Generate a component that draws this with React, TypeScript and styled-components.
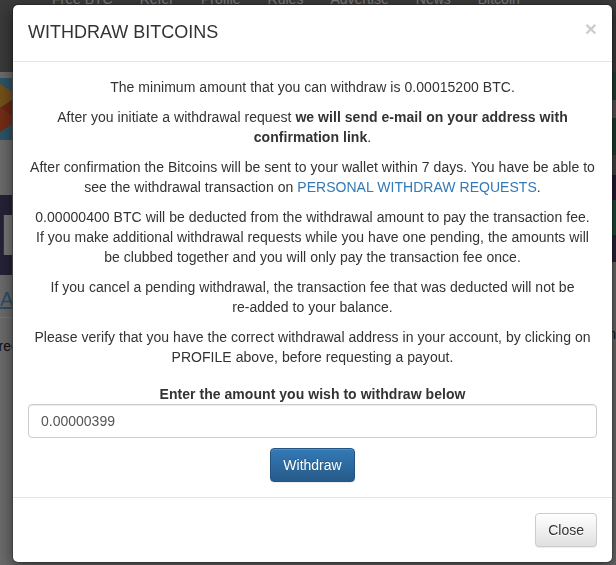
import React from 'react';
import styled, { createGlobalStyle } from 'styled-components';

const GlobalStyle = createGlobalStyle`
  html, body {
    margin: 0;
    padding: 0;
  }
  body {
    font-family: "Liberation Sans", Arial, Helvetica, sans-serif;
    font-size: 14px;
    line-height: 1.42857143;
    color: #333;
    background: #fff;
  }
  * {
    box-sizing: border-box;
  }
`;

const navLinks = ['Free BTC', 'Refer', 'Profile', 'Rules', 'Advertise', 'News', 'Bitcoin'];

const Page = styled.div`
  position: relative;
  width: 616px;
  height: 565px;
  overflow: hidden;
  background: #d6d6d6;
`;

const NavBar = styled.div`
  height: 72px;
  background: #747474;
  overflow: hidden;
`;

const NavLinks = styled.ul`
  display: flex;
  gap: 27px;
  list-style: none;
  margin: -11px 0 0;
  padding: 0 0 0 52px;
`;

const NavLink = styled.li`
  color: #f2f2f2;
  white-space: nowrap;
`;

const Content = styled.div`
  display: flex;
  justify-content: space-between;
`;

const LeftCol = styled.div`
  width: 12px;
  display: flex;
  flex-direction: column;
  padding-top: 6px;
  overflow: hidden;
`;

const RightCol = styled.div`
  width: 5px;
  display: flex;
  flex-direction: column;
  align-items: flex-end;
  overflow: hidden;
`;

const Ad = styled.div<{ $bg: string; $h: number; $mt?: number }>`
  flex: none;
  width: 40px;
  height: ${p => p.$h}px;
  margin-top: ${p => p.$mt ?? 0}px;
  background: ${p => p.$bg};
  overflow: hidden;
  color: #eee;
  font-size: 58px;
  font-weight: bold;
  line-height: 80px;
  letter-spacing: -4px;
`;

const SideLink = styled.a`
  display: block;
  margin-top: 12px;
  color: #5a9ad8;
  font-size: 20px;
  text-decoration: underline;
  line-height: 24px;
`;

const SideRule = styled.hr`
  width: 40px;
  margin: 6px 0 0;
  border: 0;
  border-top: 1px solid #eee;
`;

const SideText = styled.div<{ $shift: number; $top: number }>`
  flex: none;
  margin-top: ${p => p.$top}px;
  margin-left: ${p => p.$shift}px;
  color: #222;
  white-space: nowrap;
`;

const Backdrop = styled.div`
  position: fixed;
  inset: 0;
  background: rgba(0, 0, 0, 0.5);
`;

const ModalWrap = styled.div`
  position: fixed;
  inset: 0;
  overflow: hidden;
`;

const Dialog = styled.div`
  width: 601px;
  margin: 4px 0 0 12px;
  background: #fff;
  border: 1px solid rgba(0, 0, 0, 0.2);
  border-radius: 6px;
  box-shadow: 0 5px 15px rgba(0, 0, 0, 0.5);
  background-clip: padding-box;
`;

const Header = styled.div`
  padding: 15px;
  border-bottom: 1px solid #e5e5e5;
`;

const CloseX = styled.button`
  float: right;
  margin-top: -2px;
  padding: 0;
  border: 0;
  background: transparent;
  font-family: inherit;
  font-size: 21px;
  font-weight: bold;
  line-height: 1;
  color: #000;
  text-shadow: 0 1px 0 #fff;
  opacity: 0.2;
  cursor: pointer;
`;

const Title = styled.h4`
  margin: 0;
  font-size: 18px;
  font-weight: 500;
  line-height: 1.42857143;
`;

const Body = styled.div`
  padding: 15px;
  text-align: center;
  letter-spacing: 0.04px;
`;

const Para = styled.p`
  margin: 0 0 10px;
`;

const Link = styled.a`
  color: #337ab7;
  text-decoration: none;
`;

const Form = styled.form`
  display: flex;
  flex-direction: column;
  align-items: center;
  margin-top: 17px;
`;

const Label = styled.label`
  font-weight: bold;
`;

const Input = styled.input`
  width: 100%;
  height: 34px;
  padding: 6px 12px;
  font-family: inherit;
  font-size: 14px;
  line-height: 1.42857143;
  color: #555;
  background: #fff;
  border: 1px solid #ccc;
  border-radius: 4px;
  box-shadow: inset 0 1px 1px rgba(0, 0, 0, 0.075);
  outline: none;
`;

const Button = styled.button<{ $variant: 'primary' | 'default' }>`
  display: inline-block;
  padding: 6px 12px;
  font-family: inherit;
  font-size: 14px;
  line-height: 1.42857143;
  border: 1px solid ${p => (p.$variant === 'primary' ? '#245580' : '#ccc')};
  border-radius: 4px;
  cursor: pointer;
  color: ${p => (p.$variant === 'primary' ? '#fff' : '#333')};
  background-image: ${p =>
    p.$variant === 'primary'
      ? 'linear-gradient(to bottom, #337ab7 0, #265a88 100%)'
      : 'linear-gradient(to bottom, #fff 0, #e0e0e0 100%)'};
  text-shadow: ${p => (p.$variant === 'primary' ? '0 -1px 0 rgba(0,0,0,.2)' : '0 1px 0 #fff')};
  box-shadow: inset 0 1px 0 rgba(255, 255, 255, 0.15), 0 1px 1px rgba(0, 0, 0, 0.075);
`;

const WithdrawButton = styled(Button)`
  margin-top: 10px;
`;

const Footer = styled.div`
  display: flex;
  justify-content: flex-end;
  padding: 15px;
  border-top: 1px solid #e5e5e5;
`;

const Triangles = () => (
  <svg width="40" height="62" viewBox="0 0 40 62" style={{ flex: 'none' }}>
    <rect width="40" height="62" fill="#5aa8c8" />
    <polygon points="0,6 18,18 0,30" fill="#e8a030" />
    <polygon points="0,30 18,18 18,42" fill="#d84a22" />
    <polygon points="0,30 18,42 0,54" fill="#e85a2a" />
    <polygon points="18,18 36,30 18,42" fill="#c03a1c" />
    <polygon points="18,0 36,12 18,18" fill="#f0c040" />
    <polygon points="18,42 36,54 18,62" fill="#f0b838" />
  </svg>
);

export default function App() {
  return (
    <>
      <GlobalStyle />
      <Page>
        <NavBar>
          <NavLinks>
            {navLinks.map(l => (
              <NavLink key={l}>{l}</NavLink>
            ))}
          </NavLinks>
        </NavBar>
        <Content>
          <LeftCol>
            <Triangles />
            <Ad $bg="#4a4470" $h={80} $mt={55}>IT</Ad>
            <SideLink>AI</SideLink>
            <SideRule />
            <SideText $shift={-10} $top={18}>Free</SideText>
          </LeftCol>
          <RightCol>
            <Ad $bg="linear-gradient(to bottom, #3e7a62 0 32px, #aaa 32px 50px, #3c7a60 50px 87px, #888 87px 107px, #463a66 107px 132px, #3c9474 132px 167px, #544470 167px 194px)" $h={194} $mt={-4} />
            <SideText $shift={0} $top={62}>Bitcoin</SideText>
          </RightCol>
        </Content>
        <Backdrop />
        <ModalWrap>
          <Dialog>
            <Header>
              <CloseX type="button">×</CloseX>
              <Title>WITHDRAW BITCOINS</Title>
            </Header>
            <Body>
              <Para>The minimum amount that you can withdraw is 0.00015200 BTC.</Para>
              <Para>
                After you initiate a withdrawal request <b>we will send e-mail on your address with</b>
                <br />
                <b>confirmation link</b>.
              </Para>
              <Para>
                After confirmation the Bitcoins will be sent to your wallet within 7 days. You have be able to
                <br />
                see the withdrawal transaction on <Link href="#">PERSONAL WITHDRAW REQUESTS</Link>.
              </Para>
              <Para>
                0.00000400 BTC will be deducted from the withdrawal amount to pay the transaction fee.
                <br />
                If you make additional withdrawal requests while you have one pending, the amounts will
                <br />
                be clubbed together and you will only pay the transaction fee once.
              </Para>
              <Para>
                If you cancel a pending withdrawal, the transaction fee that was deducted will not be
                <br />
                re-added to your balance.
              </Para>
              <Para>
                Please verify that you have the correct withdrawal address in your account, by clicking on
                <br />
                PROFILE above, before requesting a payout.
              </Para>
              <Form onSubmit={e => e.preventDefault()}>
                <Label htmlFor="amount">Enter the amount you wish to withdraw below</Label>
                <Input id="amount" type="text" defaultValue="0.00000399" />
                <WithdrawButton $variant="primary" type="submit">Withdraw</WithdrawButton>
              </Form>
            </Body>
            <Footer>
              <Button $variant="default" type="button">Close</Button>
            </Footer>
          </Dialog>
        </ModalWrap>
      </Page>
    </>
  );
}
